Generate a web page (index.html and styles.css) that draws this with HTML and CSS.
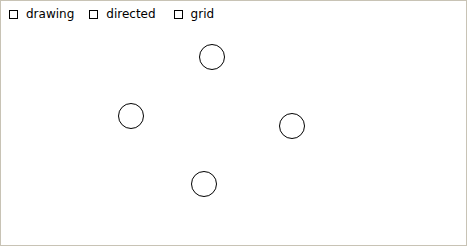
FILE: index.html
```html
<!DOCTYPE html>
<html>
<head>
<meta charset="utf-8">
<link rel="stylesheet" href="styles.css">
</head>
<body>
<div class="frame">
  <div class="toolbar">
    <label class="item item-drawing"><span class="box"></span><span class="label">drawing</span></label>
    <label class="item item-directed"><span class="box"></span><span class="label">directed</span></label>
    <label class="item item-grid"><span class="box"></span><span class="label">grid</span></label>
  </div>
  <svg class="canvas" width="465" height="218" viewBox="0 0 465 218">
    <g class="nodes">
      <circle cx="211" cy="30" r="12.5"/>
      <circle cx="130" cy="89" r="12.5"/>
      <circle cx="291" cy="99" r="12.5"/>
      <circle cx="203" cy="157" r="12.5"/>
    </g>
  </svg>
</div>
</body>
</html>
```
FILE: styles.css
```css
html, body {
  margin: 0;
  padding: 0;
  background: #fff;
}
.frame {
  width: 467px;
  height: 246px;
  box-sizing: border-box;
  border: 1px solid #c8c3b5;
  display: flex;
  flex-direction: column;
  background: #fff;
}
.toolbar {
  display: flex;
  align-items: center;
  height: 26px;
  padding-left: 8px;
  font-family: "DejaVu Sans", sans-serif;
  font-size: 12px;
  color: #000;
}
.item {
  display: flex;
  align-items: center;
}
.box {
  width: 9px;
  height: 9px;
  box-sizing: border-box;
  border: 1px solid #000;
  margin-right: 8px;
}
.item-drawing { margin-right: 15px; }
.item-directed { margin-right: 18px; }
.canvas {
  display: block;
  flex: 1;
}
.nodes circle {
  fill: none;
  stroke: #000;
  stroke-width: 1;
}
```
